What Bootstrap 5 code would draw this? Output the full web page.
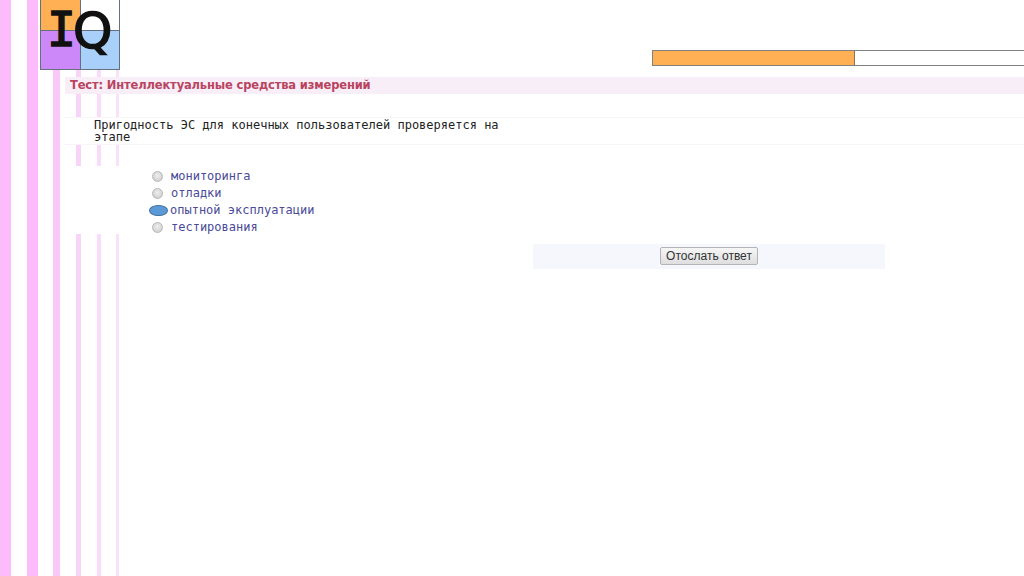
<!DOCTYPE html>
<html lang="ru">
<head>
    <meta charset="UTF-8">
    <title>Тест</title>
    <link href="https://cdn.jsdelivr.net/npm/bootstrap@5.3.2/dist/css/bootstrap.min.css" rel="stylesheet">
    <style>
        body {
            min-height: 576px;
            background-color: #fff;
            background-repeat: no-repeat;
            background-image: linear-gradient(to right,
                #fcbcfc 0 11px, #fff 11px 27px,
                #fcbcfc 27px 38px, #fff 38px 53px,
                #f9c8f9 53px 60px, #fff 60px 76px,
                #f9d4f9 76px 81px, #fff 81px 97px,
                #f9dcf9 97px 101px, #fff 101px 116px,
                #f7e2f7 116px 119px, #fff 119px);
        }
        .top-head { height: 70px; margin-left: 40px; }
        .iq-logo {
            position: relative;
            width: 80px;
            height: 70px;
            display: grid;
            grid-template-columns: 1fr 1fr;
            grid-template-rows: 30px 38px;
            border: 1px solid #66707c;
            border-top: 0;
            background: #66707c;
            gap: 1px;
            flex: none;
        }
        .iq-a { background: #ffb055; }
        .iq-b { background: #fff; }
        .iq-c { background: #cc88f8; }
        .iq-d { background: #a9d0fb; }
        .iq-i {
            position: absolute;
            left: 6px;
            top: 6px;
            font: 48px/46px "DejaVu Sans Mono", monospace;
            -webkit-text-stroke: 1.5px #111;
            color: #111;
        }
        .iq-q {
            position: absolute;
            left: 32px;
            top: 6px;
            font: 50px/50px "DejaVu Sans", sans-serif;
            -webkit-text-stroke: 1.5px #111;
            color: #111;
        }
        .time-track {
            width: 372px;
            height: 16px;
            margin-top: 50px;
            margin-left: 532px;
            border: 1px solid #808080;
            border-right: 0;
            background: #fff;
            flex: none;
        }
        .time-fill { width: 202px; height: 100%; background: #ffb055; border-right: 1px solid #8a7350; }
        .test-title {
            margin: 7px 0 0 65px;
            height: 17px;
            padding-left: 5px;
            background: #f8eef8;
            color: #b8445f;
            font: bold 11.5px/17px "DejaVu Sans", sans-serif;
            letter-spacing: -.15px;
        }
        .quest-box {
            margin: 23px 0 0 64px;
            height: 28px;
            padding: 1px 0 0 30px;
            background: #fff;
            border-top: 1px solid #f8f4f8;
            border-bottom: 1px solid #f8f4f8;
            font: 12px/12px "DejaVu Sans Mono", monospace;
            color: #222;
        }
        .quest-text { width: 410px; }
        .answers {
            margin: 21px 0 0 64px;
            height: 68px;
            padding: 2px 0 0 85px;
            background: #fff;
            font: 12px/17px "DejaVu Sans Mono", monospace;
            color: #4a4a98;
        }
        .answer-row { height: 17px; }
        .answer-row input {
            appearance: none;
            width: 11px;
            height: 11px;
            margin: 0 8px 0 3px;
            border-radius: 50%;
            border: 1px solid #b8b8b8;
            background: radial-gradient(circle at 50% 40%, #eee, #c8c8c8);
            flex: none;
        }
        .answer-row input:checked {
            width: 19px;
            margin: 0 2px 0 0;
            border: 1px solid #3f6f9f;
            background: #5b9ad6;
        }
        .send-wrap {
            width: 352px;
            height: 25px;
            margin: 10px 0 0 533px;
            padding-top: 3px;
            background: #f6f7fc;
        }
        .send-btn {
            width: 98px;
            height: 18px;
            padding: 0;
            border: 1px solid #b4b4b4;
            border-radius: 2px;
            background: linear-gradient(#f6f6f6, #dedede);
            color: #333;
            font: 12px/16px "Liberation Sans", Arial, sans-serif;
        }
    </style>
</head>
<body>
    <div class="top-head d-flex align-items-start">
        <div class="iq-logo">
            <div class="iq-a"></div>
            <div class="iq-b"></div>
            <div class="iq-c"></div>
            <div class="iq-d"></div>
            <span class="iq-i">I</span>
            <span class="iq-q">Q</span>
        </div>
        <div class="time-track"><div class="time-fill"></div></div>
    </div>

    <div class="test-title">Тест: Интеллектуальные средства измерений</div>

    <div class="quest-box">
        <div class="quest-text">Пригодность ЭС для конечных пользователей проверяется на этапе</div>
    </div>

    <form class="answers">
        <label class="answer-row d-flex align-items-center"><input type="radio" name="otvet">мониторинга</label>
        <label class="answer-row d-flex align-items-center"><input type="radio" name="otvet">отладки</label>
        <label class="answer-row d-flex align-items-center"><input type="radio" name="otvet" checked>опытной эксплуатации</label>
        <label class="answer-row d-flex align-items-center"><input type="radio" name="otvet">тестирования</label>
    </form>

    <div class="send-wrap d-flex justify-content-center align-items-start">
        <button type="button" class="send-btn">Отослать ответ</button>
    </div>

    <script src="https://cdn.jsdelivr.net/npm/bootstrap@5.3.2/dist/js/bootstrap.bundle.min.js"></script>
</body>
</html>
